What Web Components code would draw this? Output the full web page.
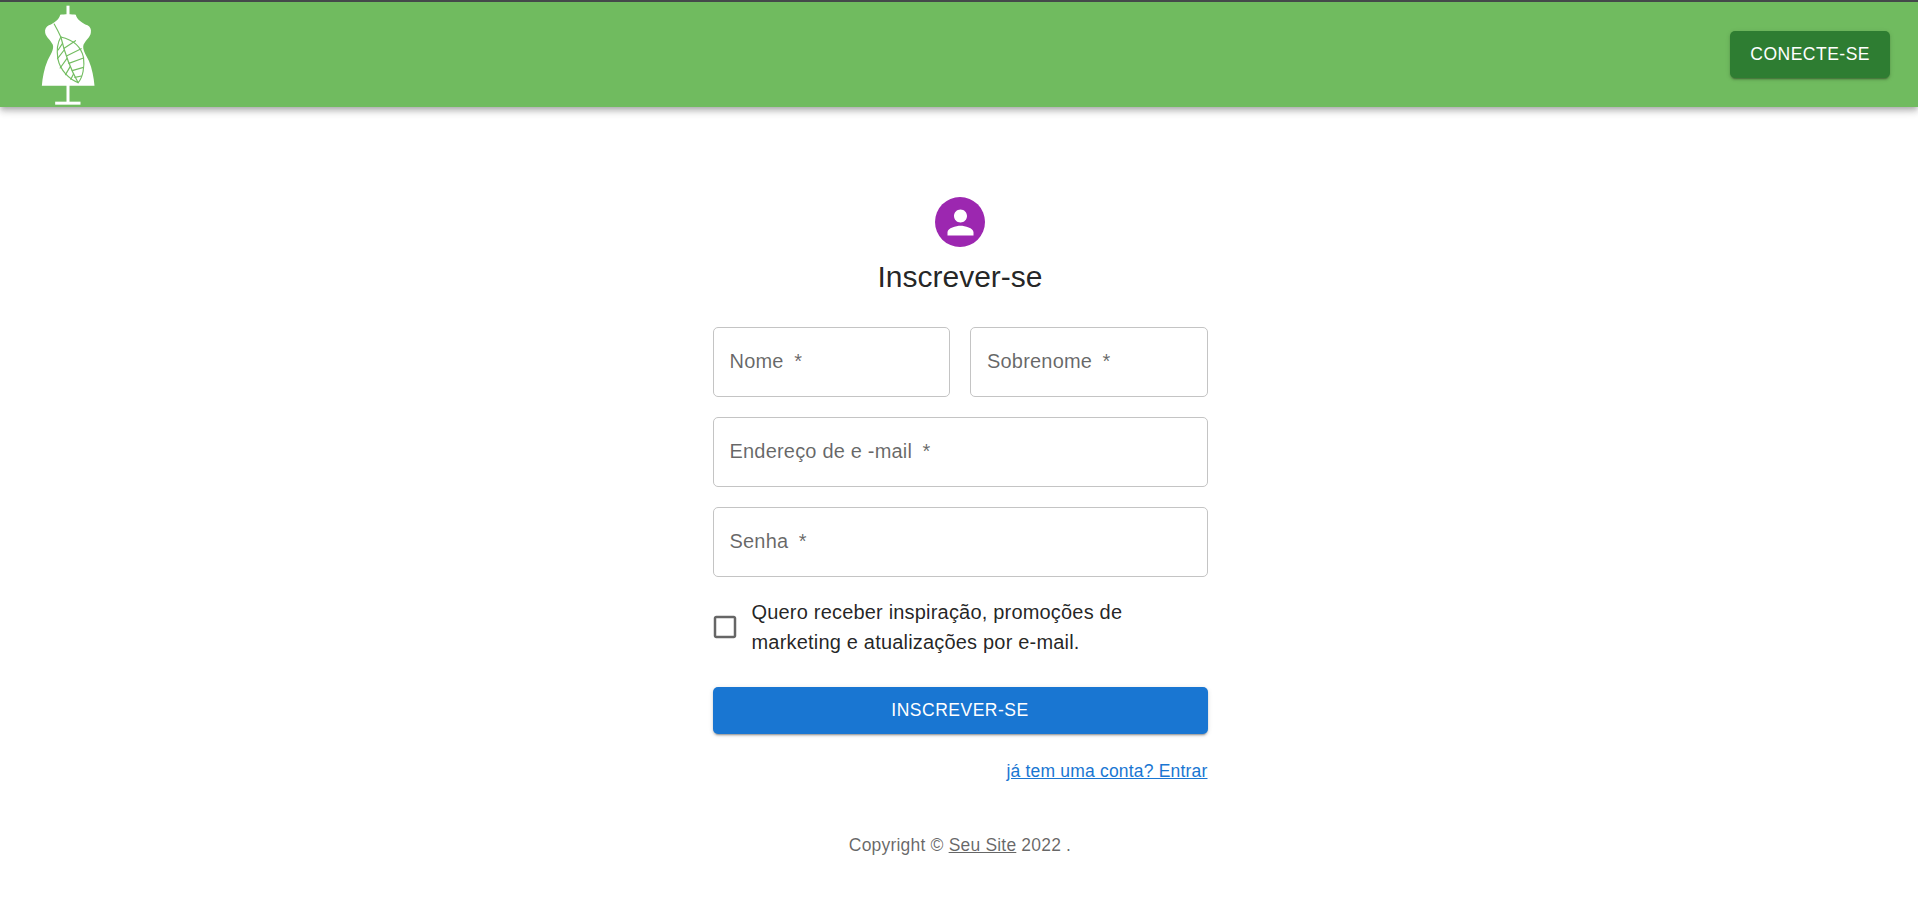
<!DOCTYPE html>
<html lang="pt">
<head>
<meta charset="utf-8">
<title>Inscrever-se</title>
<style>
  html, body { margin: 0; background: #fff; }
  body { font-family: "Liberation Sans", Arial, sans-serif; color: rgba(0,0,0,.87); min-height: 912px; }
</style>
</head>
<body>
<app-bar></app-bar>
<signup-page></signup-page>

<script>
const ui = (strings) => {
    const template = document.createElement('template');
    template.innerHTML = strings;
    return template;
};

const barTemplate = ui(`
    <style>
        :host {
            display: flex;
            justify-content: space-between;
            box-sizing: border-box;
            height: 107px;
            padding: 3px 28px 0 40px;
            background: #70bb5f;
            border-top: 2px solid #44484a;
            box-shadow: 0 2px 5px -1px rgba(0,0,0,.2), 0 5px 6px 0 rgba(0,0,0,.14), 0 1px 12px 0 rgba(0,0,0,.12);
            position: relative;
        }
        svg { display: block; width: 57px; height: 101px; }
        .login { margin-top: 26px; }
    </style>
    <svg viewBox="120 15 170 303" aria-hidden="true">
        <rect x="199" y="17" width="9" height="30" fill="#fff"/>
        <path fill="#fff" d="M180 44 C192 42 215 42 227 44 C230 58 244 68 262 76 C270 80 274 88 272 98 C270 112 258 118 250 134 C246 148 256 162 266 182 C276 206 281 232 283 257 L125 257 C127 232 132 206 142 182 C152 162 162 148 158 134 C150 118 138 112 135 98 C133 88 138 80 146 76 C164 68 177 58 180 44 Z"/>
        <rect x="199" y="255" width="9" height="52" fill="#fff"/>
        <rect x="165" y="305" width="76" height="9" fill="#fff"/>
        <g fill="none" stroke="#74bd62" stroke-width="3.5" stroke-linecap="round" stroke-linejoin="round">
            <path d="M162 72 C170 86 176 98 182 111"/>
            <path d="M182 111 C212 118 242 136 250 172 C254 200 248 232 234 248 C208 238 180 212 173 176 C169 150 172 128 182 111 Z"/>
            <path d="M182 111 C192 152 210 206 234 248"/>
            <path d="M192 145 L226 122"/><path d="M199 168 L243 146"/><path d="M206 190 L250 174"/>
            <path d="M216 212 L250 202"/><path d="M224 232 L244 228"/>
            <path d="M187 130 L174 150"/><path d="M192 150 L172 176"/><path d="M200 176 L180 204"/>
            <path d="M210 200 L196 224"/><path d="M220 222 L212 238"/>
        </g>
    </svg>
    <div class="login"><mui-button color="#2e7d32">CONECTE-SE</mui-button></div>
`);

class AppBar extends HTMLElement {
    constructor() {
        super();
        this.attachShadow({mode: 'open'}).appendChild(barTemplate.content.cloneNode(true));
    }
}

const buttonTemplate = ui(`
    <style>
        :host { display: inline-block; }
        button {
            display: block;
            width: 100%;
            height: 47px;
            padding: 0 20px;
            border: 0;
            border-radius: 5px;
            color: #fff;
            background: var(--button-color, #1976d2);
            font: 500 17.5px/1 "Liberation Sans", Arial, sans-serif;
            letter-spacing: .5px;
            box-shadow: 0 3px 1px -2px rgba(0,0,0,.2), 0 2px 2px 0 rgba(0,0,0,.14), 0 1px 5px 0 rgba(0,0,0,.12);
        }
    </style>
    <button type="button"><slot></slot></button>
`);

class MuiButton extends HTMLElement {
    constructor() {
        super();
        this.attachShadow({mode: 'open'}).appendChild(buttonTemplate.content.cloneNode(true));
    }

    connectedCallback() {
        if (this.hasAttribute('color')) this.style.setProperty('--button-color', this.getAttribute('color'));
    }
}

const fieldTemplate = ui(`
    <style>
        :host {
            display: flex;
            align-items: center;
            box-sizing: border-box;
            height: 70px;
            padding: 0 16px 2px;
            border: 1px solid #c4c4c4;
            border-radius: 5px;
            color: rgba(0,0,0,.6);
            font-size: 20px;
            letter-spacing: .19px;
            white-space: pre;
        }
        i { margin-left: -1px; font-style: normal; }
    </style>
    <span><slot></slot>  <i>*</i></span>
`);

class TextField extends HTMLElement {
    constructor() {
        super();
        this.attachShadow({mode: 'open'}).appendChild(fieldTemplate.content.cloneNode(true));
    }
}

const checkTemplate = ui(`
    <style>
        :host { display: flex; align-items: center; gap: 12px; font-size: 20px; line-height: 30px; letter-spacing: .19px; }
        svg { flex: none; display: block; width: 30px; height: 30px; margin: 0 0 0 -3px; }
        span { display: block; width: 430px; }
    </style>
    <svg viewBox="0 0 24 24" aria-hidden="true"><path fill="rgba(0,0,0,.6)" d="M19 5v14H5V5h14m0-2H5c-1.1 0-2 .9-2 2v14c0 1.1.9 2 2 2h14c1.1 0 2-.9 2-2V5c0-1.1-.9-2-2-2z"/></svg>
    <span><slot></slot></span>
`);

class CheckRow extends HTMLElement {
    constructor() {
        super();
        this.attachShadow({mode: 'open'}).appendChild(checkTemplate.content.cloneNode(true));
    }
}

const pageTemplate = ui(`
    <style>
        :host { display: flex; flex-direction: column; align-items: center; padding: 90px 0 0 2px; }
        .avatar {
            display: flex; align-items: center; justify-content: center;
            width: 50px; height: 50px; border-radius: 50%;
            background: #9c27b0;
        }
        .avatar svg { display: block; width: 39px; height: 39px; fill: #fff; }
        h1 { margin: 10px 0 30px; font-size: 30px; font-weight: 400; line-height: 40px; }
        form { display: grid; grid-template-columns: 1fr 1fr; gap: 20px; width: 495px; }
        .wide { grid-column: 1 / -1; }
        mui-button { margin-top: 10px; }
        .signin { margin-top: 2px; text-align: right; font-size: 17.5px; line-height: 30px; letter-spacing: .19px; }
        .signin a { color: #1976d2; }
        footer { margin-top: 47px; color: rgba(0,0,0,.6); font-size: 17.5px; line-height: 25px; letter-spacing: .19px; }
        footer a { color: inherit; }
    </style>
    <div class="avatar">
        <svg viewBox="0 0 24 24" aria-hidden="true"><path d="M12 12c2.21 0 4-1.79 4-4s-1.79-4-4-4-4 1.79-4 4 1.79 4 4 4zm0 2c-2.67 0-8 1.34-8 4v2h16v-2c0-2.66-5.33-4-8-4z"/></svg>
    </div>
    <h1>Inscrever-se</h1>
    <form>
        <text-field>Nome</text-field>
        <text-field>Sobrenome</text-field>
        <text-field class="wide">Endereço de e -mail</text-field>
        <text-field class="wide">Senha</text-field>
        <check-row class="wide">Quero receber inspiração, promoções de marketing e atualizações por e-mail.</check-row>
        <mui-button class="wide">INSCREVER-SE</mui-button>
        <div class="wide signin"><a href="#">já tem uma conta? Entrar</a></div>
    </form>
    <footer>Copyright © <a href="#">Seu Site</a> 2022 .</footer>
`);

class SignupPage extends HTMLElement {
    constructor() {
        super();
        this.attachShadow({mode: 'open'}).appendChild(pageTemplate.content.cloneNode(true));
    }
}

customElements.define('app-bar', AppBar);
customElements.define('mui-button', MuiButton);
customElements.define('text-field', TextField);
customElements.define('check-row', CheckRow);
customElements.define('signup-page', SignupPage);
</script>
</body>
</html>
